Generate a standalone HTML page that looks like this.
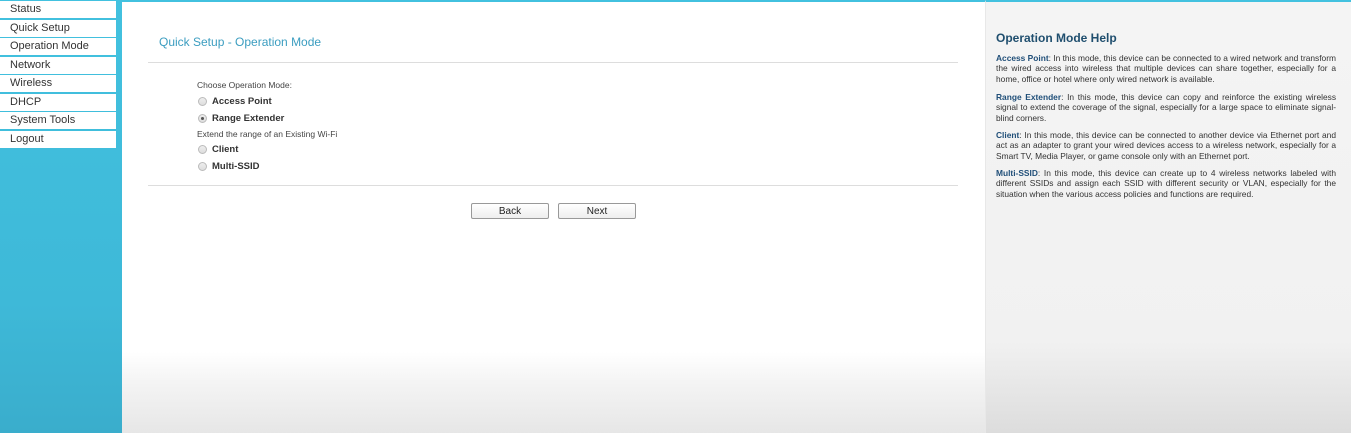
<!DOCTYPE html>
<html><head><style>
*{margin:0;padding:0;box-sizing:border-box}
body{width:1351px;height:433px;overflow:hidden;font-family:"Liberation Sans",Arial,sans-serif;position:relative;background:#fff}
#side{position:absolute;left:0;top:0;width:122px;height:433px;background:linear-gradient(#42c1df,#3eb9d8 70%,#3aadcc)}
#side div{position:absolute;left:0;width:116px;height:17px;background:#fff;font-size:11px;color:#333;padding-left:10px;line-height:17px}
#main{position:absolute;left:122px;top:0;width:863px;height:433px;background:linear-gradient(#fff 0,#fff 350px,#f4f4f4 380px,#e6e6e6 433px);border-top:2px solid #42c1df}
#help{position:absolute;left:985px;top:0;width:366px;height:433px;background:linear-gradient(#f4f4f4 0,#f1f1f1 340px,#dcdcdc 433px);border-top:2px solid #42c1df;border-left:1px solid #e8e8e8}
.t{position:absolute;font-size:11px;color:#444;white-space:nowrap}
.b{font-weight:bold;color:#333;font-size:9.5px}
.r{position:absolute;width:9px;height:9px;border-radius:50%;border:1px solid #bbb;background:linear-gradient(#eee,#ddd)}
.btn{position:absolute;width:78px;height:16px;border:1px solid #999;border-radius:2px;background:linear-gradient(#fff,#eee);font-size:10px;text-align:center;line-height:15px;color:#222}
#help h3{position:absolute;left:10px;top:29px;font-size:12px;color:#1f4e6e}
#help p{position:absolute;left:10px;width:340px;font-size:8.4px;line-height:10.3px;color:#333;text-align:justify}
#help p span{color:#1f4e78;font-weight:bold}
</style></head><body>
<div id="side">
<div style="top:1px">Status</div>
<div style="top:19.5px">Quick Setup</div>
<div style="top:38px">Operation Mode</div>
<div style="top:56.5px">Network</div>
<div style="top:75px">Wireless</div>
<div style="top:93.5px">DHCP</div>
<div style="top:112px">System Tools</div>
<div style="top:130.5px">Logout</div>
</div>
<div id="main">
<div class="t" style="left:37px;top:33px;font-size:12px;color:#3b9dc0">Quick Setup - Operation Mode</div>
<div style="position:absolute;left:26px;top:60px;width:810px;height:1px;background:#ddd"></div>
<div class="t" style="left:75px;top:78px;font-size:8.5px">Choose Operation Mode:</div>
<div class="r" style="left:76px;top:95px"></div><div class="t b" style="left:90px;top:94px">Access Point</div>
<div class="r" style="left:76px;top:112px"><div style="position:absolute;left:2px;top:2px;width:3px;height:3px;border-radius:50%;background:#555"></div></div><div class="t b" style="left:90px;top:111px">Range Extender</div>
<div class="t" style="left:75px;top:127px;font-size:8.5px">Extend the range of an Existing Wi-Fi</div>
<div class="r" style="left:76px;top:143px"></div><div class="t b" style="left:90px;top:142px">Client</div>
<div class="r" style="left:76px;top:160px"></div><div class="t b" style="left:90px;top:159px">Multi-SSID</div>
<div style="position:absolute;left:26px;top:183px;width:810px;height:1px;background:#ddd"></div>
<div class="btn" style="left:349px;top:201px">Back</div>
<div class="btn" style="left:436px;top:201px">Next</div>
</div>
<div id="help">
<h3>Operation Mode Help</h3>
<p style="top:51px"><span>Access Point</span>: In this mode, this device can be connected to a wired network and transform the wired access into wireless that multiple devices can share together, especially for a home, office or hotel where only wired network is available.</p>
<p style="top:90px"><span>Range Extender</span>: In this mode, this device can copy and reinforce the existing wireless signal to extend the coverage of the signal, especially for a large space to eliminate signal-blind corners.</p>
<p style="top:128px"><span>Client</span>: In this mode, this device can be connected to another device via Ethernet port and act as an adapter to grant your wired devices access to a wireless network, especially for a Smart TV, Media Player, or game console only with an Ethernet port.</p>
<p style="top:166px"><span>Multi-SSID</span>: In this mode, this device can create up to 4 wireless networks labeled with different SSIDs and assign each SSID with different security or VLAN, especially for the situation when the various access policies and functions are required.</p>
</div>
</body></html>
